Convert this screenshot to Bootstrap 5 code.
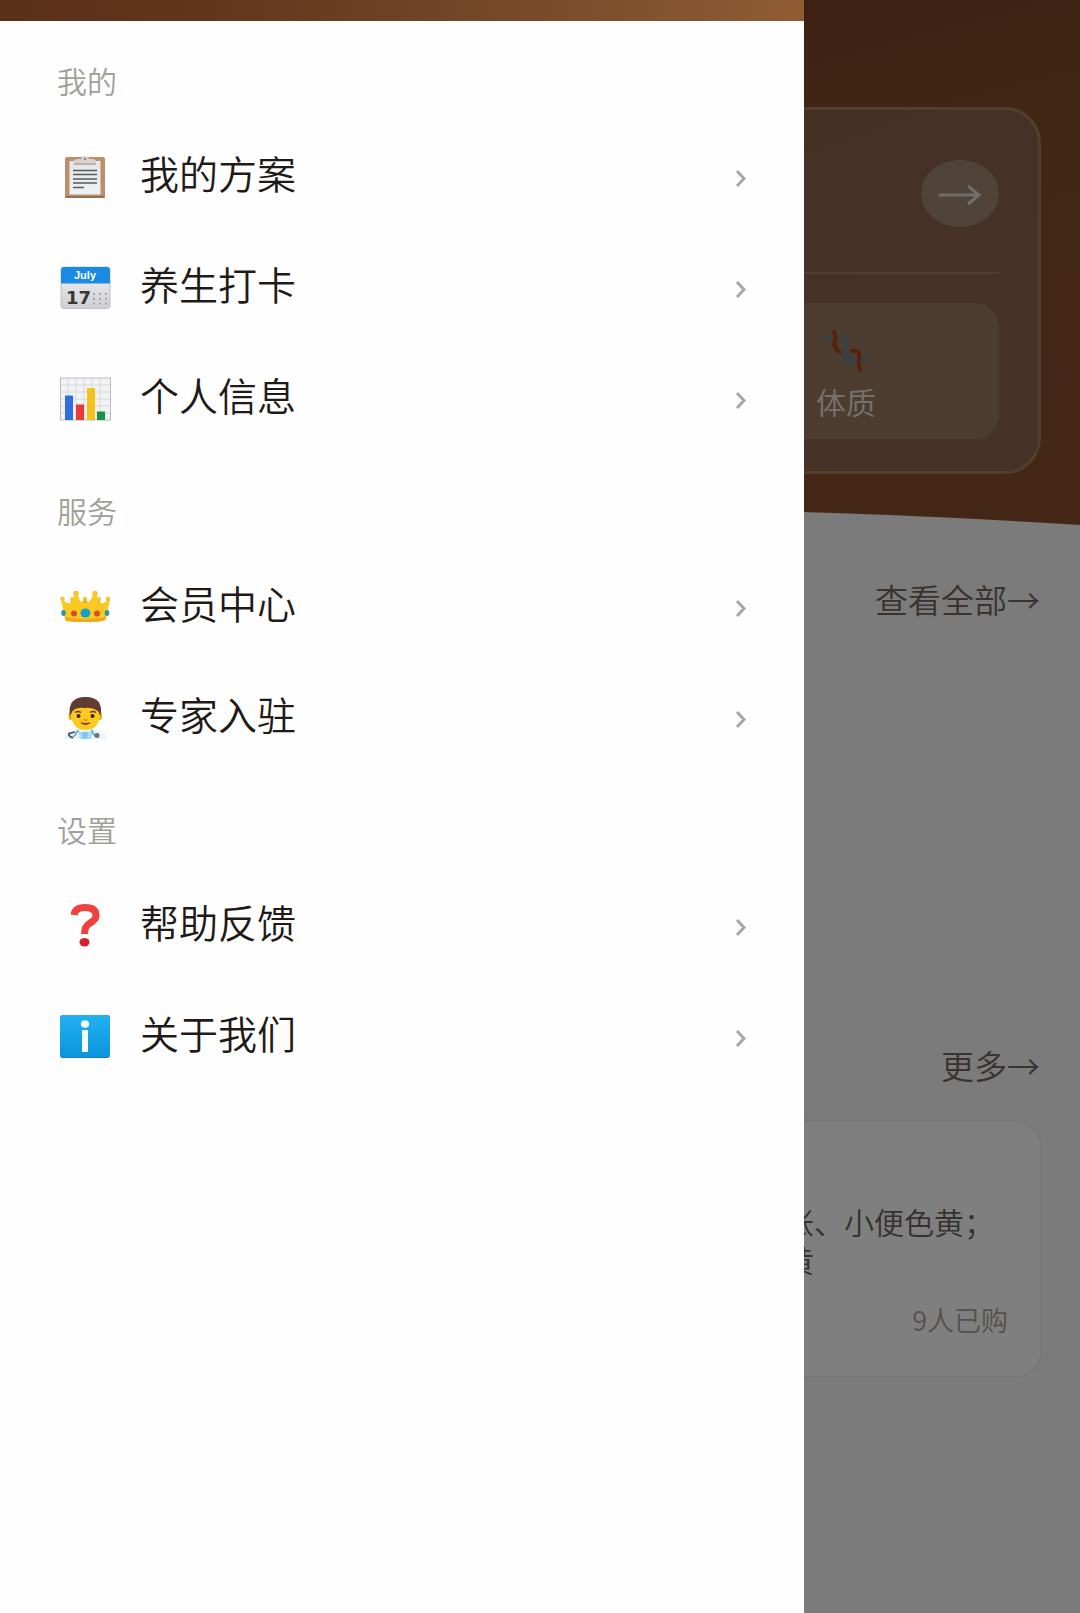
<!DOCTYPE html>
<html lang="zh-CN">
<head>
<meta charset="utf-8">
<meta name="viewport" content="width=device-width, initial-scale=1">
<title>我的</title>
<link href="https://cdn.jsdelivr.net/npm/bootstrap@5.3.0/dist/css/bootstrap.min.css" rel="stylesheet">
<style>
  body { font-family: "Noto Sans CJK SC", sans-serif; font-weight: 350; background: #f6f6f6; color: #1f1a17; overflow-x: hidden; }
  a { color: inherit; text-decoration: none; }
  .page-main { min-height: 100vh; }

  /* hero */
  .hero { background: linear-gradient(165deg, #784024 0%, #784026 22%, #824c2a 45%, #8a4e30 100%); padding-top: 107px; }
  .hero-card { margin: 0 39px; height: 367px; padding: 50px 39px 32px; border: 3px solid #a07e5c; border-radius: 36px; background: linear-gradient(160deg, #84603e, #8e6450 70%); }
  .hero-head { height: 114px; border-bottom: 2px solid #a07c62; }
  .go-btn { width: 78px; height: 67px; border-radius: 50%; background: #a08870; border: 0; }
  .tile { width: 33.3333%; height: 136px; margin-top: 29px; border-radius: 24px; background: #9a7a60; color: #f0e4dc; font-size: 30px; line-height: 40px; }
  .hero-curve { height: 17px; margin-top: 34px; display: block; width: 100%; }

  /* sections under the hero */
  .more-link { font-size: 33px; line-height: 44px; color: #73665e; }
  .sect { padding: 0 40px; }
  .sect-plans { padding-top: 52px; min-height: 518px; }
  .product { margin-top: 35px; height: 254px; border-radius: 24px; background: #fff; padding: 80px 32px 36px; box-shadow: 0 0 3px rgba(0,0,0,.12); }
  .product p { width: 224px; font-size: 30px; line-height: 38px; color: #6b625c; }
  .sold { font-size: 27px; line-height: 40px; color: #a8a098; }

  /* drawer */
  .offcanvas.drawer { --bs-offcanvas-width: 74.4444%; --bs-offcanvas-border-width: 0; --bs-offcanvas-bg: #fefefe; color: #1f1a17; }
  .drawer-top { height: 21px; flex: none; background: linear-gradient(90deg, #5a3019 0%, #62331b 22%, #6e4224 50%, #8f5c34 100%); }
  .group-title { font-size: 30px; line-height: 40px; font-weight: 350; color: #a39e97; margin: 0; padding: 35px 57px 22px; }
  .menu-item { height: 111px; padding: 0 56px 0 58px; background: none; border: 0; font-size: 39px; line-height: 56px; color: inherit; }
  .menu-item .pic { width: 54px; height: 44px; flex: none; margin: 0 28px 2px 0; }
  .menu-item .label { padding-bottom: 12px; }
  .chev { width: 14px; height: 20px; fill: none; stroke: #aaa6a2; stroke-width: 3; }
</style>
</head>
<body>
<main class="page-main">
  <section class="hero">
    <div class="hero-card">
      <div class="hero-head d-flex justify-content-end align-items-start">
        <button class="go-btn d-flex align-items-center justify-content-center p-0" type="button" aria-label="进入">
          <svg width="44" height="22" viewBox="0 0 44 22" fill="none" stroke="#fff" stroke-opacity=".72" stroke-width="3"><path d="M1 12H41M30 3L41 12L30 21"/></svg>
        </button>
      </div>
      <div class="d-flex justify-content-end">
        <a href="#" class="tile d-flex flex-column align-items-center pt-4">
          <svg width="52" height="54" viewBox="0 0 52 54" fill="none" stroke-linecap="round">
            <g stroke="#668494" stroke-width="4" stroke-opacity=".8"><path d="M3 12Q7 15 10 10M22 10Q28 14 25 20Q24 25 30 29Q34 33 32 37M27 25L24 31L31 34M47 30L42 33"/></g>
            <g stroke="#a8461c" stroke-width="4"><path d="M14 5Q17 11 14 17Q16 24 20 25M32 24Q41 22 39 31Q38 37 40 43"/></g>
          </svg>
          <span>体质</span>
        </a>
      </div>
    </div>
    <svg class="hero-curve" viewBox="0 0 1080 17" preserveAspectRatio="none" fill="#f6f6f6"><path d="M0 17Q540 -17 1080 17Z"/></svg>
  </section>
  <section class="sect sect-plans d-flex justify-content-end align-items-start">
    <a href="#" class="more-link">查看全部→</a>
  </section>
  <section class="sect">
    <div class="d-flex justify-content-end"><a href="#" class="more-link">更多→</a></div>
    <article class="product d-flex flex-column align-items-end justify-content-between">
      <p class="mb-0">胀、小便色黄；<br>黄</p>
      <div class="sold">9人已购</div>
    </article>
  </section>
</main>

<div class="offcanvas-backdrop show"></div>

<aside class="offcanvas offcanvas-start show drawer" data-bs-backdrop="false" data-bs-scroll="true" tabindex="-1" aria-label="菜单">
  <div class="drawer-top"></div>
  <nav class="pt-1">
    <h2 class="group-title">我的</h2>
    <div class="list-group list-group-flush">
      <a href="#" class="menu-item d-flex align-items-center">
        <svg class="pic" viewBox="0 0 54 44">
          <defs><linearGradient id="paper" x2="0" y2="1"><stop stop-color="#e4e5e5"/><stop offset="1" stop-color="#eef2f4"/></linearGradient></defs>
          <rect x="7" y="2" width="40" height="41" rx="2" fill="#bb8f6a"/><path d="M7 41H47V42Q47 43 45 43H9Q7 43 7 42Z" fill="#98704e"/>
          <rect x="11.500" y="6" width="31" height="33.500" fill="url(#paper)"/>
          <path d="M16 6Q16 4 20 4H23Q23 1 27 1T31 4H34Q38 4 38 6V9H16Z" fill="#d9d2d0"/><path d="M16 9H38" stroke="#aaa5a5" stroke-width="1.500"/><circle cx="27" cy="4" r="1.300" fill="#a18379"/>
          <path d="M15 15.500H39M15 19.500H39M15 24H39M15 28H39M15 32.500H26" stroke="#555a5f" stroke-width="1.600"/>
        </svg>
        <span class="label flex-grow-1">我的方案</span>
        <svg class="chev" viewBox="0 0 14 20"><path d="M3 3L10 10.500L3 18"/></svg>
      </a>
      <a href="#" class="menu-item d-flex align-items-center">
        <svg class="pic" viewBox="0 0 54 44">
          <defs><linearGradient id="cal" x2="0" y2="1"><stop stop-color="#f4f4f4"/><stop offset="1" stop-color="#cfcfd3"/></linearGradient></defs>
          <rect x="3" y="1" width="49" height="41.500" rx="3" fill="url(#cal)" stroke="#b8b8bd" stroke-width=".8"/>
          <path d="M3 17.500V4Q3 1 6 1H49Q52 1 52 4V17.500Z" fill="#1a8ae4"/>
          <text x="27" y="12.500" text-anchor="middle" font-family="Liberation Sans, sans-serif" font-weight="700" font-size="11" fill="#fff">July</text>
          <text x="8" y="38" font-family="DejaVu Sans, sans-serif" font-weight="700" font-size="18" fill="#37373a">17</text>
          <path d="M35 28H50M35 33H50M35 37.500H50" stroke="#a9a9ad" stroke-width="2" stroke-dasharray="2 4"/>
        </svg>
        <span class="label flex-grow-1">养生打卡</span>
        <svg class="chev" viewBox="0 0 14 20"><path d="M3 3L10 10.500L3 18"/></svg>
      </a>
      <a href="#" class="menu-item d-flex align-items-center">
        <svg class="pic" viewBox="0 0 54 44">
          <rect x="2.500" y="1" width="50" height="42" fill="#f2f3f4" stroke="#b9bbbd"/>
          <path d="M10 1V42M18 1V42M26 1V42M34 1V42M42 1V42M3 8H52M3 15H52M3 22H52M3 29H52M3 36H52" stroke="#d3d5d8" stroke-width=".9"/>
          <path d="M7 18.500H15V43H7Z" fill="#2f6de0"/><path d="M18 27.500H26V43H18Z" fill="#e93b35"/><path d="M29 11H37V43H29Z" fill="#f4c11d"/><path d="M39 34.500H47V43H39Z" fill="#159447"/>
        </svg>
        <span class="label flex-grow-1">个人信息</span>
        <svg class="chev" viewBox="0 0 14 20"><path d="M3 3L10 10.500L3 18"/></svg>
      </a>
    </div>

    <h2 class="group-title">服务</h2>
    <div class="list-group list-group-flush">
      <a href="#" class="menu-item d-flex align-items-center">
        <svg class="pic" viewBox="0 0 54 44">
          <path d="M11 25L14 12L20 25ZM21 24L27 12L33 24ZM34 25L41 12L44 25Z" fill="#e8a51c"/>
          <path d="M7 35L3 14Q9 19 13 18Q16 15 16.500 8H19.500Q21 18 27 18T35.500 8H38.500Q39 15 42 18Q46 19 52 14L48 34Q47 37 27.500 37T7 35Z" fill="#fac922"/>
          <path d="M7 32Q27 36 48 32L47.500 34.500Q46 37 27.500 37T7.500 35Z" fill="#efa91c"/>
          <g fill="#f8c52a"><circle cx="4.500" cy="14" r="2.300"/><circle cx="18" cy="8.500" r="2.800"/><circle cx="37" cy="8.500" r="2.800"/><circle cx="50" cy="14" r="2.300"/><circle cx="14" cy="14" r="2"/><circle cx="27" cy="14" r="2.200"/><circle cx="41" cy="14" r="2"/></g>
          <ellipse cx="27.500" cy="28" rx="5" ry="4.500" fill="#18a0c4"/><circle cx="16" cy="28.500" r="3" fill="#dc4a2a"/><circle cx="39" cy="28.500" r="3" fill="#dc4a2a"/>
          <ellipse cx="5.500" cy="28" rx="2.300" ry="3" fill="#2797ae"/><ellipse cx="49" cy="28" rx="2.300" ry="3" fill="#2797ae"/>
        </svg>
        <span class="label flex-grow-1">会员中心</span>
        <svg class="chev" viewBox="0 0 14 20"><path d="M3 3L10 10.500L3 18"/></svg>
      </a>
      <a href="#" class="menu-item d-flex align-items-center">
        <svg class="pic" viewBox="0 0 54 44">
          <path d="M6 43Q7 37 15 35L21 33H34L40 35Q48 37 49 43Z" fill="#eaf1f7"/>
          <path d="M20 34L27 38L35 34L33 43H22Z" fill="#a5dcf6"/><path d="M24 36H30L29 43H25Z" fill="#7fc6ec"/>
          <ellipse cx="12.500" cy="20" rx="2" ry="4" fill="#e8a91b"/><ellipse cx="42" cy="20" rx="2" ry="4" fill="#e8a91b"/>
          <path d="M13 14Q13 3 27.500 3T42 14V20Q40 34 27.500 34T13 20Z" fill="#fbc91f"/>
          <path d="M12 20Q9 1 27.500 1T42.500 20L40 15Q34 11 27 12Q19 11 14.500 15Z" fill="#603b30"/>
          <path d="M17 16.500Q20 14.500 23 16.500M32 16.500Q35 14.500 38 16.500" fill="none" stroke="#603b30" stroke-width="1.500"/>
          <circle cx="20.500" cy="20" r="2" fill="#3f2b25"/><circle cx="34.500" cy="20" r="2" fill="#3f2b25"/>
          <path d="M23 27Q27.500 30 32 27Q27.500 28 23 27Z" fill="#7b3e23" stroke="#7b3e23"/><path d="M25.500 23.500Q27.500 25 29.500 23.500" fill="none" stroke="#d98a17" stroke-width="1.500"/>
          <path d="M20 34Q18 39 15 41M34 34Q35 39 38 40" fill="none" stroke="#59a5cf" stroke-width="1.500"/>
          <path d="M17 36L11 37.500Q10 40 15 42" fill="none" stroke="#3f5360" stroke-width="1.800"/><circle cx="39" cy="39.500" r="2.500" fill="#68757d"/>
        </svg>
        <span class="label flex-grow-1">专家入驻</span>
        <svg class="chev" viewBox="0 0 14 20"><path d="M3 3L10 10.500L3 18"/></svg>
      </a>
    </div>

    <h2 class="group-title">设置</h2>
    <div class="list-group list-group-flush">
      <a href="#" class="menu-item d-flex align-items-center">
        <svg class="pic" viewBox="0 0 54 44">
          <path d="M16 11Q17 3.500 27 3.500Q38 3.500 38 11.500Q38 16 32 19Q26.500 22 26.500 30" fill="none" stroke="#f0413f" stroke-width="7"/>
          <ellipse cx="26.500" cy="38.200" rx="5" ry="4.200" fill="#d81f2b"/>
        </svg>
        <span class="label flex-grow-1">帮助反馈</span>
        <svg class="chev" viewBox="0 0 14 20"><path d="M3 3L10 10.500L3 18"/></svg>
      </a>
      <a href="#" class="menu-item d-flex align-items-center">
        <svg class="pic" viewBox="0 0 54 44">
          <defs><linearGradient id="info" x2="0" y2="1"><stop stop-color="#22b1f1"/><stop offset="1" stop-color="#0c94dc"/></linearGradient></defs>
          <rect x="2" y="0" width="50" height="43" rx="3" fill="#0d7fc0"/><rect x="2" y="0" width="50" height="42" rx="3" fill="url(#info)"/>
          <ellipse cx="27" cy="9" rx="4.200" ry="3.800" fill="#f2fafd"/><path d="M24 15H30V37H24Z" fill="#f2fafd"/>
        </svg>
        <span class="label flex-grow-1">关于我们</span>
        <svg class="chev" viewBox="0 0 14 20"><path d="M3 3L10 10.500L3 18"/></svg>
      </a>
    </div>
  </nav>
</aside>
<script src="https://cdn.jsdelivr.net/npm/bootstrap@5.3.0/dist/js/bootstrap.bundle.min.js"></script>
</body>
</html>
